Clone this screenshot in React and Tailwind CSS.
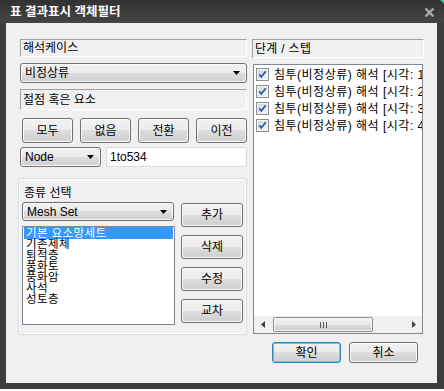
const BTN =
  "rounded-[3px] border border-[#707070] bg-[linear-gradient(#f2f2f2_0%,#ebebeb_50%,#dddddd_50%,#cfcfcf_100%)] shadow-[inset_0_0_0_1px_#fafafa] flex items-center justify-center";

function Arrow() {
  return (
    <svg width="7" height="4" viewBox="0 0 7 4">
      <path d="M0 0 L7 0 L3.5 4 Z" fill="#000" />
    </svg>
  );
}

function Check() {
  return (
    <svg width="13" height="13" viewBox="0 0 13 13" className="shrink-0">
      <defs>
        <linearGradient id="cbg" x1="0" y1="0" x2="1" y2="1">
          <stop offset="0" stopColor="#cfd6de" />
          <stop offset="1" stopColor="#f4f6f8" />
        </linearGradient>
      </defs>
      <rect x="0.5" y="0.5" width="12" height="12" fill="#f6f6f6" stroke="#8e8f8f" />
      <rect x="2" y="2" width="9" height="9" fill="url(#cbg)" />
      <path d="M3.2 6.3 L5.3 8.8 L9.8 3.2" stroke="#2a5bb8" strokeWidth="1.8" fill="none" />
    </svg>
  );
}

function Label({ children, h }) {
  return (
    <div
      className={`ml-[2px] border border-t-[#a0a0a0] border-l-[#a0a0a0] border-b-white border-r-white pl-[2px] flex items-center ${h}`}
    >
      {children}
    </div>
  );
}

export default function App() {
  const items = ["기본 요소망세트", "기존제체", "퇴적층", "풍화토", "풍화암", "사석", "성토층"];
  const steps = [1, 2, 3, 4];
  return (
    <div className="w-[444px] h-[391px] bg-white relative font-['Liberation_Sans','Noto_Sans_CJK_KR',sans-serif] text-[12px] text-black">
      <div className="absolute top-0 right-0 w-[6px] h-[6px] bg-[#27d6a6]" />
      <div className="relative h-[389px] bg-[#3d3d3d] rounded-tr-[6px] flex flex-col">
        <div className="h-[23px] shrink-0 flex items-center justify-between pl-[10px] pr-[9px] pt-[2px] rounded-tr-[6px] bg-[linear-gradient(#323232,#444444)]">
          <span className="text-white font-bold text-[12.5px] leading-none">표 결과표시 객체필터</span>
          <svg width="11" height="9" viewBox="0 0 11 9">
            <path d="M1.5 0.5 L9.5 8.5 M9.5 0.5 L1.5 8.5" stroke="#a9a9a9" strokeWidth="2.4" />
          </svg>
        </div>
        <div className="ml-[6px] mr-[7px] mb-[6px] flex-1 bg-[#f0f0f0] flex">
          {/* left column */}
          <div className="ml-[12px] w-[229px] flex flex-col pt-[16px]">
            <Label h="h-[18px]">해석케이스</Label>
            <div className={`mt-[6px] ml-[2px] h-[20px] ${BTN} !justify-between pl-[4px] pr-[6px]`}>
              <span>비정상류</span>
              <Arrow />
            </div>
            <div className="mt-[6px]">
              <Label h="h-[21px]">절점 혹은 요소</Label>
            </div>
            <div className="mt-[8px] ml-[4px] mr-0 flex justify-between h-[25px]">
              {["모두", "없음", "전환", "이전"].map((t) => (
                <div key={t} className={`w-[51px] h-[25px] ${BTN}`}>
                  {t}
                </div>
              ))}
            </div>
            <div className="mt-[4px] ml-[2px] flex h-[20px]">
              <div className={`w-[81px] h-[20px] ${BTN} !justify-between pl-[4px] pr-[6px]`}>
                <span>Node</span>
                <Arrow />
              </div>
              <div className="ml-[5px] flex-1 h-[20px] bg-white border border-[#dadada] rounded-[2px] pl-[3px] flex items-center">
                1to534
              </div>
            </div>
            <div className="mt-[11px] h-[157px] rounded-[3px] border border-[#d5dfe5] shadow-[inset_0_0_0_1px_#ffffff] pl-[3px] pt-[6px] flex flex-col">
              <div className="h-[17px] pl-[2px] leading-[16px]">종류 선택</div>
              <div className="flex">
                <div className="w-[153px] flex flex-col">
                  <div className={`w-[152px] h-[19px] ${BTN} !justify-between pl-[4px] pr-[6px]`}>
                    <span>Mesh Set</span>
                    <Arrow />
                  </div>
                  <div className="mt-[5px] h-[99px] border border-[#828790] bg-white pl-[1px] pr-[1px] overflow-hidden text-[11.5px] tracking-[0.4px]">
                    {items.map((t, i) => (
                      <div
                        key={t}
                        className={
                          i === 0
                            ? "h-[12px] leading-[12px] bg-[#3399ff] text-white pl-[2px] whitespace-nowrap"
                            : "h-[11px] leading-[11px] pl-[2px] whitespace-nowrap"
                        }
                      >
                        {t}
                      </div>
                    ))}
                  </div>
                </div>
                <div className="ml-[6px] mt-[1px] w-[62px] flex flex-col gap-[8px]">
                  {["추가", "삭제", "수정", "교차"].map((t) => (
                    <div key={t} className={`h-[24px] ${BTN}`}>
                      {t}
                    </div>
                  ))}
                </div>
              </div>
            </div>
          </div>
          {/* right column */}
          <div className="ml-[5px] w-[172px] flex flex-col pt-[16px]">
            <div className="h-[19px] border border-t-[#a0a0a0] border-l-[#a0a0a0] border-b-white border-r-white pl-[2px] flex items-center tracking-[0.3px]">
              단계 / 스텝
            </div>
            <div className="mt-[6px] ml-[1px] w-[170px] h-[270px] border border-[#828790] bg-white flex flex-col">
              <div className="flex-1 pt-[1px] overflow-hidden">
                {steps.map((s) => (
                  <div key={s} className="h-[17px] flex items-center pl-[2px] gap-[5px] whitespace-nowrap tracking-[0.5px]">
                    <Check />
                    <span>침투(비정상류) 해석 [시각: {s}.000]</span>
                  </div>
                ))}
              </div>
              <div className="h-[17px] bg-[#f0f0f0] flex items-center">
                <div className="w-[17px] h-[17px] flex items-center justify-center">
                  <svg width="4" height="7" viewBox="0 0 4 7">
                    <path d="M4 0 L4 7 L0 3.5 Z" fill="#404040" />
                  </svg>
                </div>
                <div className="ml-[2px] w-[100px] h-[15px] rounded-[2px] border border-[#8d8d8d] bg-[linear-gradient(#f4f4f4_0%,#e8e8e8_50%,#d9d9d9_50%,#d2d2d2_100%)] shadow-[inset_0_0_0_1px_#fbfbfb] flex items-center justify-center gap-[2px]">
                  <div className="w-[1px] h-[6px] bg-[#555]" />
                  <div className="w-[1px] h-[6px] bg-[#555]" />
                  <div className="w-[1px] h-[6px] bg-[#555]" />
                </div>
                <div className="flex-1" />
                <div className="w-[17px] h-[17px] flex items-center justify-center">
                  <svg width="4" height="7" viewBox="0 0 4 7">
                    <path d="M0 0 L0 7 L4 3.5 Z" fill="#404040" />
                  </svg>
                </div>
              </div>
            </div>
            <div className="mt-[8px] mr-[6px] flex justify-end gap-[8px]">
              <div className="w-[69px] h-[21px] rounded-[3px] border border-[#3c7fb1] bg-[linear-gradient(#f2f2f2_0%,#ebebeb_50%,#dddddd_50%,#cfcfcf_100%)] shadow-[inset_0_0_0_1px_#48d3fb] flex items-center justify-center">
                확인
              </div>
              <div className={`w-[69px] h-[21px] ${BTN}`}>취소</div>
            </div>
          </div>
        </div>
      </div>
    </div>
  );
}
